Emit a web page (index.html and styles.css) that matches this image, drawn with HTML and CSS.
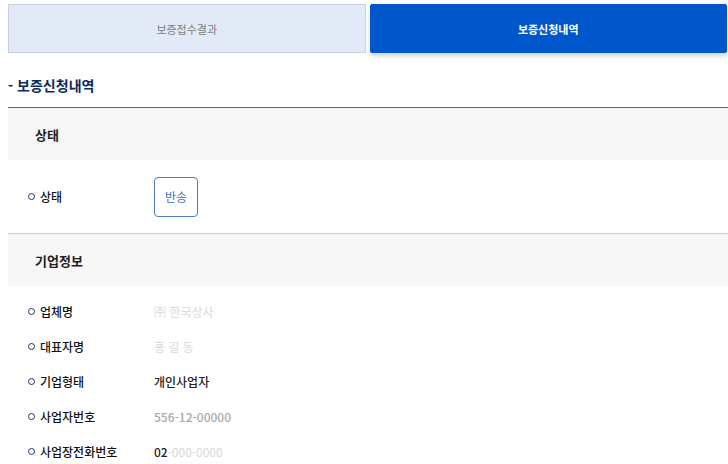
FILE: index.html
```html
<!DOCTYPE html>
<html lang="ko">
<head>
  <meta charset="UTF-8">
  <meta name="viewport" content="width=device-width, initial-scale=1.0">
  <title>보증신청내역</title>
  <link rel="stylesheet" href="styles.css">
</head>
<body>
  <div class="tabs">
    <a href="#" class="tab">보증접수결과</a>
    <a href="#" class="tab tab-active">보증신청내역</a>
  </div>

  <h2 class="page-title">- 보증신청내역</h2>

  <div class="detail">
    <div class="section-head">상태</div>
    <div class="status-row">
      <span class="label">상태</span>
      <span class="badge">반송</span>
    </div>

    <div class="section-head">기업정보</div>
    <ul class="info-list">
      <li><span class="label">업체명</span><span class="value masked">㈜ 한국상사</span></li>
      <li><span class="label">대표자명</span><span class="value masked">홍 길 동</span></li>
      <li><span class="label">기업형태</span><span class="value">개인사업자</span></li>
      <li><span class="label">사업자번호</span><span class="value half">556-12-00000</span></li>
      <li><span class="label">사업장전화번호</span><span class="value">02<span class="masked">-000-0000</span></span></li>
    </ul>
  </div>
</body>
</html>
```

FILE: styles.css
```css
* {
  margin: 0;
  padding: 0;
  box-sizing: border-box;
}

body {
  font-family: "Noto Sans CJK KR", "Noto Sans", sans-serif;
  color: #222;
  background-color: #fff;
  font-size: 12px;
}

.tabs {
  display: flex;
  gap: 4px;
  padding: 4px 1px 0 8px;
}

.tab {
  flex: 1;
  height: 49px;
  display: flex;
  align-items: center;
  justify-content: center;
  font-size: 11px;
  color: #808080;
  text-decoration: none;
  background-color: #e2eaf7;
  border: 1px solid #c9d1dd;
}

.tab-active {
  background-color: #0057cc;
  border-color: #0057cc;
  color: #fff;
  font-weight: bold;
  border-radius: 2px;
  box-shadow: 0 3px 5px rgba(0, 0, 0, 0.18);
}

.page-title {
  margin: 22px 0 12px 8px;
  font-size: 14px;
  line-height: 20px;
  color: #0b2a5b;
  font-weight: bold;
}

.detail {
  margin-left: 8px;
  border-top: 1px solid #666;
}

.section-head {
  height: 52px;
  display: flex;
  align-items: center;
  padding-left: 27px;
  background-color: #f6f6f6;
  font-size: 13px;
  font-weight: bold;
  color: #222;
}

.status-row {
  height: 74px;
  display: flex;
  align-items: center;
  padding-left: 20px;
  border-bottom: 1px solid #ccc;
}

.label {
  width: 126px;
  display: flex;
  align-items: center;
  gap: 5px;
  flex-shrink: 0;
  font-weight: 500;
  color: #111;
}

.label::before {
  content: '';
  width: 5px;
  height: 5px;
  border: 1px solid #1d3566;
  border-radius: 50%;
}

.value {
  font-weight: 500;
}

.badge {
  width: 44px;
  height: 40px;
  display: flex;
  align-items: center;
  justify-content: center;
  border: 1px solid #4f7cc0;
  border-radius: 4px;
  color: #3d6fc2;
}

.info-list {
  list-style-type: none;
  padding-top: 8px;
}

.info-list li {
  height: 35px;
  display: flex;
  align-items: center;
  padding-left: 20px;
}

.masked {
  color: #d8d8d8;
  font-weight: normal;
}

.half {
  color: #aaa;
}
```
